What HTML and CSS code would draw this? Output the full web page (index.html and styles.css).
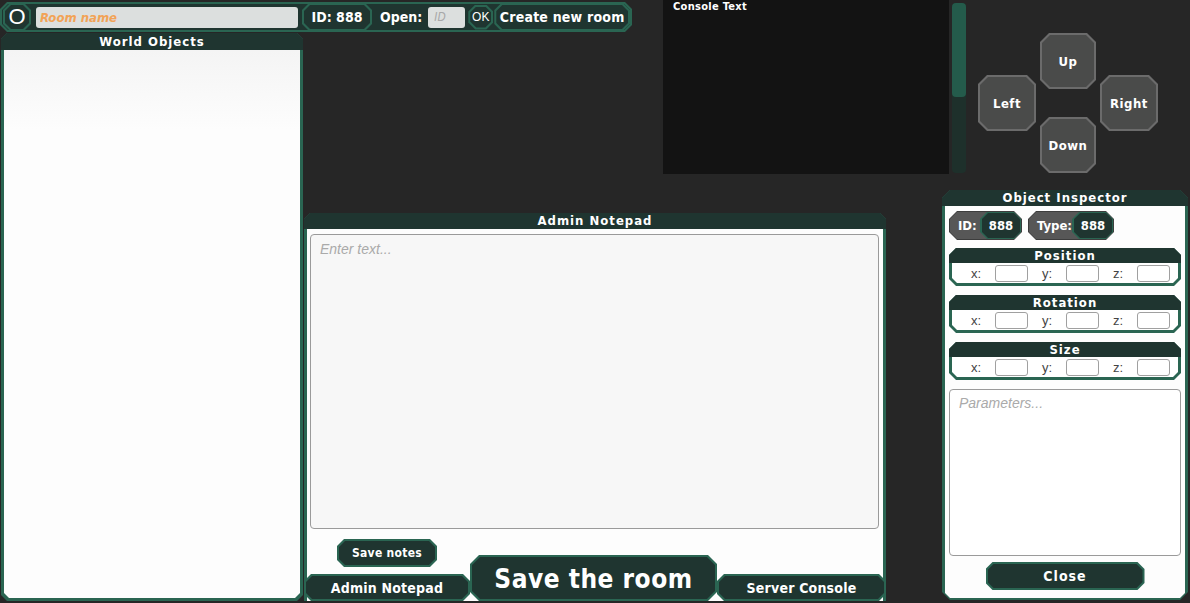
FILE: index.html
```html
<!DOCTYPE html>
<html lang="en">
<head>
  <meta charset="UTF-8">
  <title>Room Editor</title>
  <link rel="stylesheet" href="styles.css">
</head>
<body>
  <div class="topbar oct">
    <div class="topbar-in oct">
      <button class="btn oct round"><span class="btn-in oct">O</span></button>
      <input class="room-name" placeholder="Room name">
      <div class="btn oct id-tag"><span class="btn-in oct">ID: 888</span></div>
      <span class="open-label">Open:</span>
      <input class="open-id" placeholder="ID">
      <button class="btn oct ok"><span class="btn-in oct">OK</span></button>
      <button class="btn oct create"><span class="btn-in oct">Create new room</span></button>
    </div>
  </div>

  <div class="panel oct world">
    <div class="panel-head">World Objects</div>
    <div class="panel-body oct-b"></div>
  </div>

  <div class="console">
    <div class="console-text">Console Text</div>
  </div>
  <div class="scroll"><div class="thumb"></div></div>

  <div class="dpad">
    <button class="pad oct up"><span class="pad-in oct">Up</span></button>
    <button class="pad oct left"><span class="pad-in oct">Left</span></button>
    <button class="pad oct right"><span class="pad-in oct">Right</span></button>
    <button class="pad oct down"><span class="pad-in oct">Down</span></button>
  </div>

  <div class="panel oct notepad">
    <div class="panel-head">Admin Notepad</div>
    <div class="panel-body notepad-body">
      <textarea class="notes" placeholder="Enter text..."></textarea>
      <button class="btn oct save-notes"><span class="btn-in oct">Save notes</span></button>
      <div class="tabs">
        <button class="btn oct tab"><span class="btn-in oct">Admin Notepad</span></button>
        <button class="btn oct save-room"><span class="btn-in oct">Save the room</span></button>
        <button class="btn oct tab"><span class="btn-in oct">Server Console</span></button>
      </div>
    </div>
  </div>

  <div class="panel oct inspector">
    <div class="panel-head">Object Inspector</div>
    <div class="panel-body oct-b inspector-body">
      <div class="pills">
        <div class="pill oct pill-id"><div class="pill-in oct">
          <span class="pill-label">ID:</span>
          <span class="btn oct value"><span class="btn-in oct">888</span></span>
        </div></div>
        <div class="pill oct pill-type"><div class="pill-in oct">
          <span class="pill-label">Type:</span>
          <span class="btn oct value"><span class="btn-in oct">888</span></span>
        </div></div>
      </div>

      <div class="group oct">
        <div class="group-head">Position</div>
        <div class="group-row oct-b">
          <label>x:<input></label><label>y:<input></label><label>z:<input></label>
        </div>
      </div>
      <div class="group oct">
        <div class="group-head">Rotation</div>
        <div class="group-row oct-b">
          <label>x:<input></label><label>y:<input></label><label>z:<input></label>
        </div>
      </div>
      <div class="group oct">
        <div class="group-head">Size</div>
        <div class="group-row oct-b">
          <label>x:<input></label><label>y:<input></label><label>z:<input></label>
        </div>
      </div>

      <textarea class="params" placeholder="Parameters..."></textarea>
      <button class="btn oct close"><span class="btn-in oct">Close</span></button>
    </div>
  </div>
</body>
</html>
```

FILE: styles.css
```css
* {
  margin: 0;
  padding: 0;
  box-sizing: border-box;
}

body {
  width: 1190px;
  height: 603px;
  overflow: hidden;
  background: #262626;
  font-family: 'DejaVu Sans Condensed', 'DejaVu Sans', sans-serif;
  font-weight: bold;
  color: #fff;
  display: grid;
  grid-template-columns: 303px 329px 31px 223px 56px 7px 3px 14px 12px 180px 30px 2px;
  grid-template-rows: 33px 141px 16px 23px 388px 2px;
}

button, input, textarea {
  font: inherit;
  color: inherit;
  border: none;
  outline: none;
  background: none;
}

/* chamfered corners */
.oct {
  --c: 7px;
  clip-path: polygon(var(--c) 0, calc(100% - var(--c)) 0, 100% var(--c), 100% calc(100% - var(--c)),
    calc(100% - var(--c)) 100%, var(--c) 100%, 0 calc(100% - var(--c)), 0 var(--c));
}

.oct-b {
  --c: 5px;
  clip-path: polygon(0 0, 100% 0, 100% calc(100% - var(--c)), calc(100% - var(--c)) 100%, var(--c) 100%, 0 calc(100% - var(--c)));
}

.btn {
  display: flex;
  background: #2a6552;
  padding: 2px;
  cursor: pointer;
}

.btn-in {
  --c: 6px;
  flex: 1;
  display: flex;
  align-items: center;
  justify-content: center;
  background: #1f3530;
  white-space: nowrap;
}

/* top bar */
.topbar {
  grid-column: 1 / 3;
  grid-row: 1 / 2;
  margin: 2px 0 1px;
  background: #2a6552;
  padding: 2px;
  display: flex;
}

.topbar-in {
  --c: 6px;
  flex: 1;
  display: flex;
  align-items: center;
  background: #1f3530;
}

.round {
  width: 28px;
  height: 28px;
  margin-left: 1px;
}

.round .btn-in {
  font-family: 'Liberation Sans', sans-serif;
  font-weight: normal;
  font-size: 22px;
}

.room-name {
  width: 262px;
  height: 21px;
  margin-left: 5px;
  background: #dcdfde;
  border-radius: 3px;
  padding: 0 4px;
  font-size: 13px;
  font-style: italic;
}

.room-name::placeholder {
  color: #f2a356;
}

.id-tag {
  width: 70px;
  height: 28px;
  margin-left: 4px;
  font-size: 14px;
}

.open-label {
  margin-left: 8px;
  font-size: 14px;
}

.open-id {
  width: 37px;
  height: 21px;
  margin-left: 6px;
  background: #dcdfde;
  border-radius: 3px;
  padding: 0 6px;
  font-size: 12px;
  font-style: italic;
  font-weight: normal;
}

.open-id::placeholder {
  color: #a8a8a8;
}

.ok {
  width: 25px;
  height: 25px;
  margin-left: 3px;
}

.ok .btn-in {
  font-family: 'Liberation Sans', sans-serif;
  font-weight: normal;
  font-size: 12px;
}

.create {
  flex: 1;
  height: 28px;
  margin-left: 1px;
  font-size: 14px;
  letter-spacing: 0.2px;
}

/* panels */
.panel {
  --c: 6px;
  display: flex;
  flex-direction: column;
  background: #2a6552;
}

.panel-head {
  height: 16px;
  background: #1f3530;
  text-align: center;
  font-size: 13px;
  line-height: 16px;
  letter-spacing: 1px;
}

.panel-body {
  flex: 1;
  margin: 0 3px 3px;
  background: #fdfdfd;
}

.world {
  grid-column: 1 / 2;
  grid-row: 2 / 6;
  margin-left: 1px;
}

.world .panel-head {
  height: 17px;
  line-height: 18px;
}

.world .panel-body {
  background: linear-gradient(#f4f4f4, #fdfdfd 80px);
}

/* console */
.console {
  grid-column: 4 / 7;
  grid-row: 1 / 3;
  background: #131313;
  padding: 0 10px;
}

.console-text {
  font-size: 11px;
  letter-spacing: 0.3px;
}

.scroll {
  grid-column: 8 / 9;
  grid-row: 1 / 3;
  margin: 3px 0 1px;
  background: #1e302b;
  border-radius: 4px;
}

.thumb {
  height: 94px;
  background: #245b4b;
  border-radius: 4px;
}

/* direction pad */
.dpad {
  grid-column: 10 / 11;
  grid-row: 2 / 3;
  display: grid;
  grid-template-columns: 58px 56px 58px;
  column-gap: 4px;
  grid-template-rows: 42px 14px 28px 14px 42px;
}

.pad {
  --c: 9px;
  display: flex;
  background: #6b6b6b;
  padding: 2px;
  cursor: pointer;
}

.pad-in {
  --c: 8px;
  flex: 1;
  display: flex;
  align-items: center;
  justify-content: center;
  background: #4a4b4a;
  font-size: 13px;
  letter-spacing: 0.5px;
}

.up { grid-column: 2; grid-row: 1 / 3; }
.left { grid-column: 1; grid-row: 2 / 5; }
.right { grid-column: 3; grid-row: 2 / 5; }
.down { grid-column: 2; grid-row: 4 / 6; }

/* admin notepad */
.notepad {
  grid-column: 2 / 5;
  grid-row: 5 / 6;
  margin-left: 1px;
  clip-path: polygon(6px 0, calc(100% - 6px) 0, 100% 6px, 100% 100%, 0 100%, 0 6px);
}

.notepad-body {
  display: flex;
  flex-direction: column;
  align-items: flex-start;
  margin-bottom: 0;
}

.notes {
  width: 569px;
  height: 295px;
  margin: 5px 0 0 3px;
  background: #f7f7f7;
  border: 1px solid #9a9a9a;
  border-radius: 4px;
  padding: 6px 9px;
  resize: none;
  font-family: 'Liberation Sans', sans-serif;
  font-weight: normal;
  font-size: 14px;
  color: #333;
}

.notes::placeholder,
.params::placeholder {
  color: #aaa;
  font-style: italic;
}

.save-notes {
  width: 100px;
  height: 28px;
  margin: 10px 0 0 30px;
  font-size: 12px;
  letter-spacing: 0.3px;
}

.tabs {
  align-self: stretch;
  display: flex;
  align-items: flex-end;
  margin: -12px -3px 0;
  height: 46px;
}

.tab {
  flex: 1;
  height: 27px;
  font-size: 14px;
  letter-spacing: 0.2px;
}

.tabs .tab:first-child {
  flex: 0 0 166px;
}

.save-room {
  --c: 9px;
  flex: 0 0 247px;
  height: 46px;
  font-size: 26px;
  letter-spacing: 0.5px;
}

.save-room .btn-in {
  --c: 8px;
  padding-top: 2px;
}

/* object inspector */
.inspector {
  --c: 8px;
  grid-column: 6 / 12;
  grid-row: 4 / 6;
  margin-bottom: 1px;
}

.inspector-body {
  display: flex;
  flex-direction: column;
  padding: 5px 4px 8px;
}

.pills {
  display: flex;
  gap: 6px;
}

.pill {
  --c: 8px;
  display: flex;
  height: 29px;
  background: #3d3d3d;
  padding: 1px;
}

.pill-id { width: 73px; }
.pill-type { width: 86px; }

.pill-in {
  flex: 1;
  display: flex;
  align-items: center;
  justify-content: space-between;
  background: #575757;
  font-size: 13px;
}

.pill-label {
  padding-left: 8px;
}

.value {
  --c: 8px;
  align-self: stretch;
  width: 42px;
  margin: -1px -1px -1px 0;
}

.group {
  --c: 7px;
  display: flex;
  flex-direction: column;
  height: 38px;
  margin-top: 9px;
  background: #2a6552;
}

.pills + .group {
  margin-top: 8px;
}

.group-head {
  height: 15px;
  background: #1f3530;
  text-align: center;
  font-size: 13px;
  line-height: 16px;
  letter-spacing: 1px;
}

.group-row {
  flex: 1;
  margin: 0 3px 3px;
  background: #fff;
  display: flex;
  align-items: center;
  gap: 14px;
  padding-left: 19px;
  font-family: 'Liberation Sans', sans-serif;
  font-weight: normal;
  font-size: 13px;
  color: #444;
}

.group-row label {
  display: flex;
  align-items: center;
  width: 57px;
  justify-content: space-between;
}

.group-row input {
  width: 33px;
  height: 17px;
  background: #fff;
  border: 1px solid #a0a0a0;
  border-radius: 3px;
}

.params {
  height: 167px;
  margin-top: 9px;
  background: #fff;
  border: 1px solid #9a9a9a;
  border-radius: 4px;
  padding: 5px 9px;
  resize: none;
  font-family: 'Liberation Sans', sans-serif;
  font-weight: normal;
  font-size: 14px;
  color: #333;
}

.close {
  align-self: center;
  width: 159px;
  height: 28px;
  margin-top: 6px;
  font-size: 14px;
  letter-spacing: 1px;
}
```
